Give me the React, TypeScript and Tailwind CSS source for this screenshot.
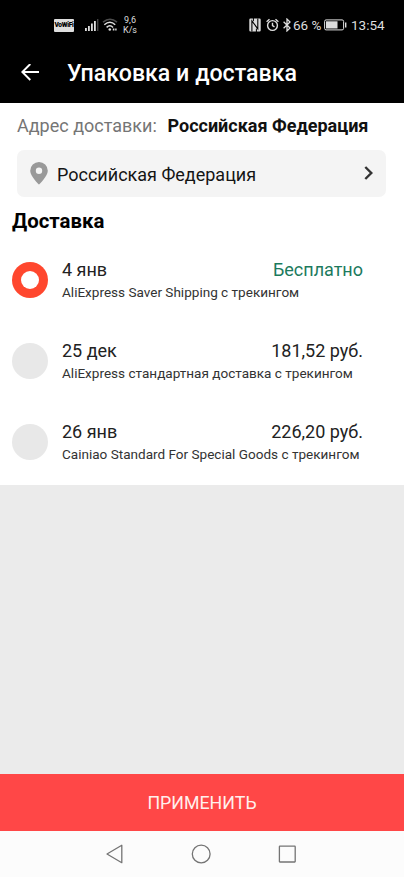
const methods = [
  { date: "4 янв", price: "Бесплатно", name: "AliExpress Saver Shipping с трекингом", free: true, selected: true },
  { date: "25 дек", price: "181,52 руб.", name: "AliExpress стандартная доставка с трекингом", free: false, selected: false },
  { date: "26 янв", price: "226,20 руб.", name: "Cainiao Standard For Special Goods с трекингом", free: false, selected: false },
];

function StatusBar() {
  return (
    <div className="flex h-[45px] items-center pt-[5px] pl-[54px] text-[#dedede]">
      <div className="flex h-[13px] w-5 items-center justify-center rounded-[1px] bg-[#dedede] text-[6.6px] leading-none font-black text-black">
        <span className="tracking-[-0.3px]">VoWiFi</span>
      </div>
      <svg className="ml-[11px]" width="14" height="14" viewBox="0 0 14 14" fill="currentColor">
        <rect x="0" y="10" width="1.8" height="3" />
        <rect x="3" y="8" width="1.8" height="5" />
        <rect x="6" y="5.5" width="1.8" height="7.5" />
        <rect x="9" y="3" width="1.8" height="10" />
        <rect x="12" y="1" width="1.4" height="12" opacity="0.3" />
      </svg>
      <svg className="ml-[3px]" width="16" height="14" viewBox="0 0 16 14" fill="none" stroke="currentColor" strokeWidth="1.5">
        <path d="M1 4.2Q8 -1.6 15 4.2" opacity="0.35" />
        <path d="M2.3 6.8Q8 1.6 13.2 6.8M4.6 9.4Q8 6 11 9.4" />
        <circle cx="7.8" cy="11.5" r="1.3" fill="currentColor" stroke="none" />
        <path d="M10.8 11.5h1.6M13.2 11.5h1.4" strokeWidth="1.8" />
      </svg>
      <div className="ml-[4px] w-[16px] text-center text-[9px] leading-[10px]">
        9,6
        <br />
        K/s
      </div>
      <svg className="ml-[111px]" width="12" height="14" viewBox="0 0 12 14">
        <path d="M1.5 .6h9a1.2 1.2 0 0 1 1.2 1.2v10.4a1.2 1.2 0 0 1-1.2 1.2h-9A1.2 1.2 0 0 1 .3 12.2V1.8A1.2 1.2 0 0 1 1.5 .6Z" fill="currentColor" />
        <path d="M2.9 13.5V2.9l5.9 7.9V.5" fill="none" stroke="#000" strokeWidth="1.1" />
        <path d="M4.4 0v3.2M7.4 14v-3.4" stroke="#000" strokeWidth="1" />
      </svg>
      <svg className="ml-[5px]" width="13" height="14" viewBox="0 0 13 14" fill="none" stroke="currentColor" strokeWidth="1.4">
        <circle cx="6.5" cy="7.5" r="4.9" />
        <path d="M6.5 4.7v3l2 1.2M.6 3.7 3.5 1.2M12.4 3.7 9.5 1.2" />
      </svg>
      <svg className="ml-[4px]" width="8" height="14" viewBox="0 0 8 14" fill="none" stroke="currentColor" strokeWidth="1.3">
        <path d="M.6 3.8 7 10 4 12.9V1.1L7 4 .6 10.2" />
      </svg>
      <span className="ml-[2px] w-[31px] text-[13.5px] whitespace-nowrap">66 %</span>
      <svg width="23" height="12" viewBox="0 0 23 12">
        <rect x=".6" y=".9" width="19" height="10" rx="1.5" fill="none" stroke="currentColor" strokeWidth="1" />
        <rect x="2" y="2.3" width="11.5" height="7.2" fill="currentColor" />
        <rect x="21" y="3.5" width="1.4" height="5" fill="currentColor" />
      </svg>
      <span className="ml-[4px] text-[13.5px] whitespace-nowrap">13:54</span>
    </div>
  );
}

function Header() {
  return (
    <header className="h-[103px] bg-black">
      <StatusBar />
      <div className="flex h-[55px] items-center pl-[21px]">
        <svg width="18" height="18" viewBox="0 0 18 18" fill="none" stroke="#fff" strokeWidth="1.9">
          <path d="M18 8H1.5M9.3 0 1.3 8l8 8" />
        </svg>
        <h1 className="ml-[28px] pt-[2px] text-[23.2px] font-medium whitespace-nowrap text-white">Упаковка и доставка</h1>
      </div>
    </header>
  );
}

function NavBar() {
  return (
    <nav className="flex h-[46px] items-center bg-[#fcfcfc] pl-[106px]">
      <svg width="190" height="20" viewBox="0 0 190 20" fill="none" stroke="#747474" strokeWidth="1.3" strokeLinejoin="round">
        <path d="M1 10 15.8 1.3v17.4z" />
        <circle cx="95.2" cy="10" r="8.9" />
        <rect x="173.4" y="2.2" width="15.8" height="15.8" rx=".5" />
      </svg>
    </nav>
  );
}

export default function App() {
  return (
    <div className="flex h-[877px] w-[404px] flex-col overflow-hidden bg-[#ebebeb] font-[Roboto,sans-serif]">
      <Header />
      <main className="h-[382px] bg-white">
        <div className="flex h-[47px] items-center pb-[2px] pl-[17px] text-[18px] whitespace-nowrap">
          <span className="w-[150.5px] text-[#757575]">Адрес доставки:</span>
          <span className="font-bold text-[#111]">Российская Федерация</span>
        </div>
        <div className="mr-[18px] ml-[17px] flex h-[47px] items-center rounded-[7px] bg-[#f4f4f4] pr-[13px] pb-[1px] pl-[13px]">
          <svg width="18" height="23" viewBox="0 0 18 23">
            <path fillRule="evenodd" fill="#999" d="M9 0a8.8 8.8 0 0 0-8.8 8.8C.2 14.5 9 22.6 9 22.6s8.8-8.1 8.8-13.8A8.8 8.8 0 0 0 9 0Zm0 5.6a3.2 3.2 0 1 1 0 6.4 3.2 3.2 0 0 1 0-6.4Z" />
          </svg>
          <span className="ml-[9px] flex-1 pt-[2px] text-[18px] whitespace-nowrap text-[#151515]">Российская Федерация</span>
          <svg width="9" height="14" viewBox="0 0 9 14" fill="none" stroke="#333" strokeWidth="2.4">
            <path d="m1.3 1 6 6-6 6" />
          </svg>
        </div>
        <h2 className="flex h-[46px] items-center pt-[2px] pl-[12px] text-[20.4px] font-bold whitespace-nowrap text-black">Доставка</h2>
        {methods.map((m) => (
          <div key={m.date} className="flex h-[81px] pt-[16px] pl-[12px]">
            <div className={`mt-[3px] flex size-9 items-center justify-center rounded-full ${m.selected ? "bg-[#ff472e]" : "bg-[#e8e8e8]"}`}>
              {m.selected && <div className="size-[18px] rounded-full bg-white" />}
            </div>
            <div className="ml-[14px] w-[301px] whitespace-nowrap">
              <div className="flex h-[20px] items-center justify-between text-[18px] text-[#222]">
                <span>{m.date}</span>
                <span className={m.free ? "text-[#1c7a5d]" : ""}>{m.price}</span>
              </div>
              <div className="mt-[4px] text-[13.55px] leading-[18px] text-[#333]">{m.name}</div>
            </div>
          </div>
        ))}
      </main>
      <div className="flex-1" />
      <button className="h-[57px] bg-[#ff4747] pt-[2px] text-[17.8px] text-[#fff0ed]">ПРИМЕНИТЬ</button>
      <NavBar />
    </div>
  );
}
